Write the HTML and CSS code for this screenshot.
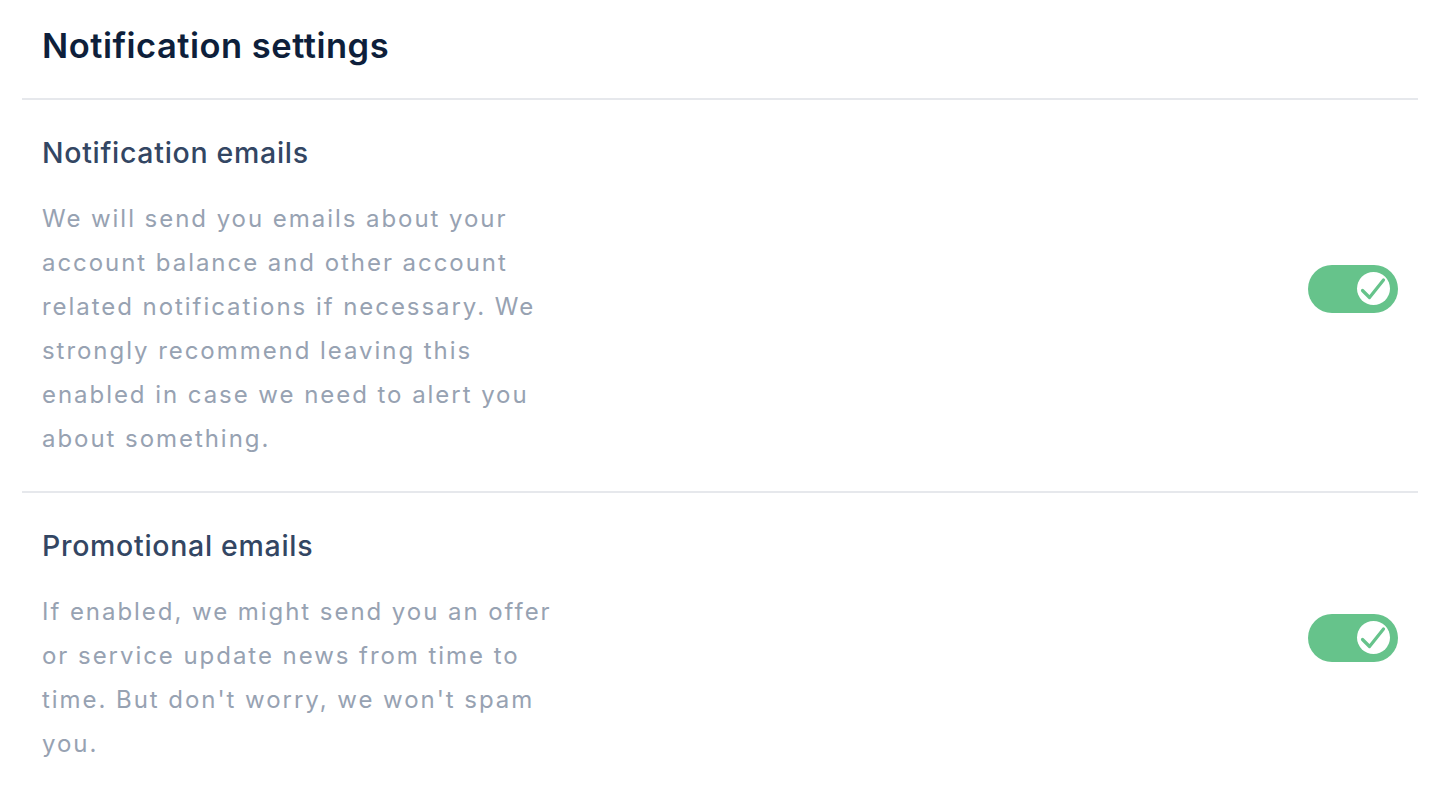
FILE: index.html
```html
<!DOCTYPE html>
<html lang="en">
<head>
<meta charset="utf-8">
<title>Notification settings</title>
<link rel="stylesheet" href="styles.css">
</head>
<body>
<main class="panel">
  <header class="panel-header">
    <h1 class="panel-title">Notification settings</h1>
  </header>
  <section class="setting">
    <div class="setting-text">
      <h2 class="setting-title">Notification emails</h2>
      <p class="setting-desc">We will send you emails about your account balance and other account related notifications if necessary. We strongly recommend leaving this enabled in case we need to alert you about something.</p>
    </div>
    <button class="toggle" type="button" aria-pressed="true" aria-label="Notification emails">
      <span class="knob">
        <svg class="check" viewBox="0 0 33 33" width="33" height="33" fill="none" stroke="currentColor" stroke-width="3.2" stroke-linecap="round" stroke-linejoin="round"><path d="M5.5 18.5L12.5 25.5L26.5 8"/></svg>
      </span>
    </button>
  </section>
  <section class="setting">
    <div class="setting-text">
      <h2 class="setting-title">Promotional emails</h2>
      <p class="setting-desc">If enabled, we might send you an offer or service update news from time to time. But don't worry, we won't spam you.</p>
    </div>
    <button class="toggle" type="button" aria-pressed="true" aria-label="Promotional emails">
      <span class="knob">
        <svg class="check" viewBox="0 0 33 33" width="33" height="33" fill="none" stroke="currentColor" stroke-width="3.2" stroke-linecap="round" stroke-linejoin="round"><path d="M5.5 18.5L12.5 25.5L26.5 8"/></svg>
      </span>
    </button>
  </section>
</main>
</body>
</html>
```
FILE: styles.css
```css
* { box-sizing: border-box; }
html, body { margin: 0; background: #ffffff; }
body {
  font-family: Inter, "Noto Sans", "Liberation Sans", sans-serif;
  -webkit-font-smoothing: antialiased;
}
.panel {
  margin: 0 28px 0 22px;
}
.panel-header {
  padding: 26px 20px 32px;
  border-bottom: 2px solid #e6e8ec;
}
.panel-title {
  margin: 0;
  font-size: 34.5px;
  line-height: 40px;
  font-weight: 600;
  letter-spacing: 0.5px;
  color: #0e1f3b;
}
.setting {
  display: flex;
  align-items: center;
  justify-content: space-between;
  padding: 35px 20px 30px;
  border-bottom: 2px solid #e6e8ec;
}
.setting:last-child { border-bottom: none; }
.setting-text { width: 522px; }
.setting-title {
  margin: 0;
  font-size: 28.5px;
  line-height: 36px;
  font-weight: 500;
  letter-spacing: 0.7px;
  color: #334663;
}
.setting-desc {
  margin: 26px 0 0;
  font-size: 24px;
  line-height: 44px;
  letter-spacing: 1.95px;
  color: #97a2b2;
}
.toggle {
  width: 90px;
  height: 48px;
  margin-bottom: 19px;
  padding: 0 8px;
  border: none;
  border-radius: 24px;
  background: #66c38b;
  display: flex;
  align-items: center;
  justify-content: flex-end;
  flex-shrink: 0;
  cursor: pointer;
}
.knob {
  width: 33px;
  height: 33px;
  border-radius: 50%;
  background: #ffffff;
  color: #66c38b;
  display: block;
}
.check { display: block; }
```
